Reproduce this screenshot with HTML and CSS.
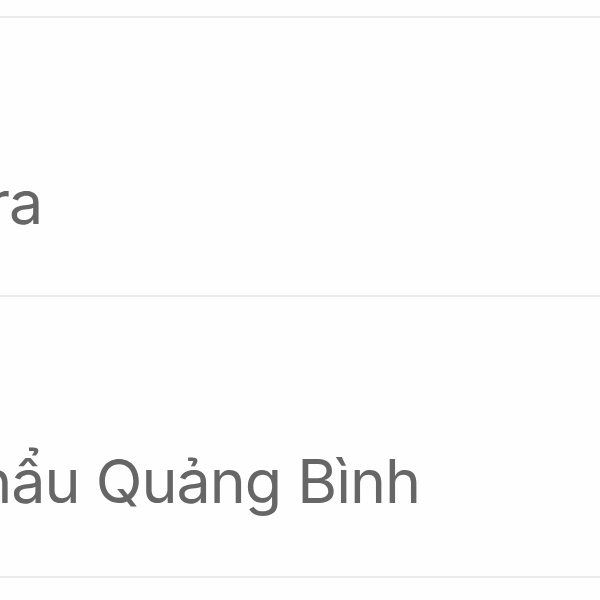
FILE: index.html
```html
<!DOCTYPE html>
<html lang="vi">
<head>
  <meta charset="UTF-8" />
  <title>Danh sách địa điểm</title>
  <link rel="stylesheet" href="styles.css">
</head>
<body>
  <ul class="list">
    <li class="row"><span class="name name-first">ra</span></li>
    <li class="row"><span class="name name-second">Cửa khẩu Quảng Bình</span></li>
  </ul>
</body>
</html>
```

FILE: styles.css
```css
body {
  margin: 0;
  background: #fefefe;
  font-family: Inter, "Noto Sans", sans-serif;
  overflow: hidden;
}
.list {
  list-style: none;
  margin: 16px 0 0 0;
  padding: 0;
}
.row {
  height: 279px;
  box-sizing: border-box;
  padding-top: 154px;
  border-top: 2px solid #ebebeb;
  white-space: nowrap;
  overflow: hidden;
}
.row:last-child {
  border-bottom: 2px solid #ebebeb;
  height: 283px;
}
.name {
  display: block;
  font-size: 61px;
  letter-spacing: -1px;
  color: #666;
  line-height: 1;
}
.name-first {
  margin-left: -13px;
}
.name-second {
  margin-left: -186px;
}
```
